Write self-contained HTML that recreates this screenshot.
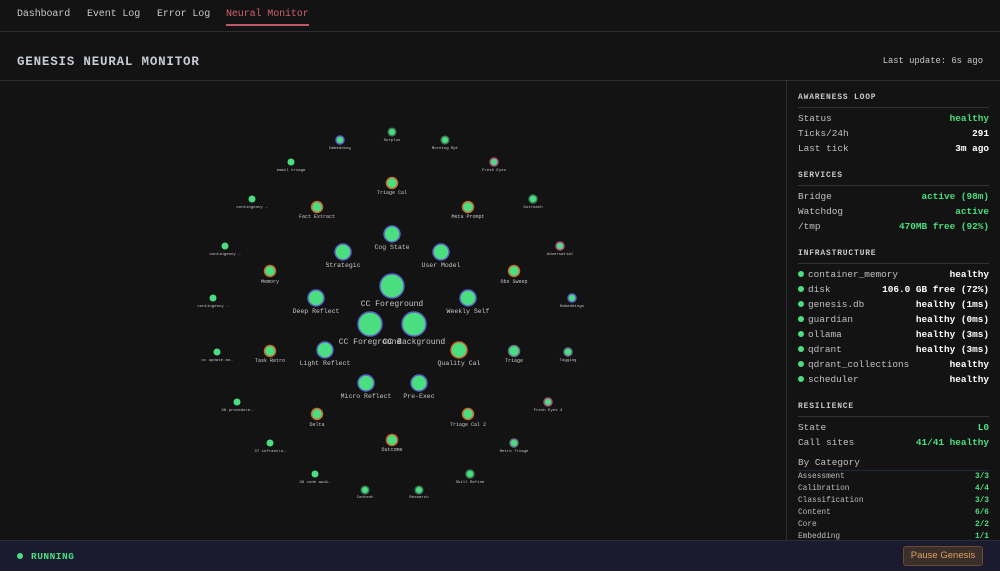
<!DOCTYPE html>
<html><head><meta charset="utf-8"><style>
*{margin:0;padding:0;box-sizing:border-box}
body{width:1000px;height:571px;background:#131313;font-family:"Liberation Mono","DejaVu Sans Mono",monospace;color:#c9c9c9;overflow:hidden;position:relative}
.nav{position:absolute;top:0;left:0;width:1000px;height:32px;border-bottom:1px solid #2e2e2e}
.nav span{position:absolute;top:9px;font-size:10px;letter-spacing:-0.1px;color:#c8c8c8}
.nav .act{color:#d0616f;border-bottom:2px solid #c0586a;padding-bottom:4px}
h1{position:absolute;left:17px;top:55px;font-size:12.5px;letter-spacing:0.8px;color:#c8ccd4;font-weight:bold}
.upd{position:absolute;right:17px;top:56px;font-size:8.8px;color:#c8c8c8}
.hline{position:absolute;left:0;top:80px;width:1000px;height:1px;background:#2e2e2e}
.vline{position:absolute;left:786px;top:80px;width:1px;height:460px;background:#2e2e2e}
.p{position:absolute;left:798px;width:191px;font-size:10px}
.sec{font-size:8px;font-weight:bold;letter-spacing:.8px;color:#c8c8c8;border-bottom:1px solid #333;padding-bottom:5px}
.r{position:absolute;left:798px;width:191px;font-size:9.4px;color:#c0c0c0;height:14px}
.r b{position:absolute;right:0;top:0;color:#fff}
.r b.g{color:#4ade80}
.r i{display:inline-block;width:6px;height:6px;border-radius:50%;background:#4ade80;margin-right:4px;vertical-align:0px}
.s{position:absolute;left:798px;width:191px;font-size:7.8px;color:#bdbdbd}
.s b{position:absolute;right:0;top:0;color:#4ade80}
.foot{position:absolute;left:0;top:540px;width:1000px;height:31px;background:#1a1b2e;border-top:1px solid #2a2b40}
.run{position:absolute;left:17px;top:10px;font-size:9.5px;font-weight:bold;color:#4ade80;letter-spacing:.5px}
.run i{display:inline-block;width:6px;height:6px;border-radius:50%;background:#4ade80;margin-right:8px}
.btn{position:absolute;left:903px;top:5px;width:80px;height:20px;border:1px solid #6b4a2c;border-radius:3px;background:#3a2f2b;color:#e0a25b;font-family:"Liberation Sans",sans-serif;font-size:9.5px;text-align:center;line-height:18px}
svg text{font-family:"Liberation Mono",monospace;fill:#c8c8c8;text-anchor:middle}
</style></head><body>
<div class="nav"><span style="left:17px">Dashboard</span><span style="left:87px">Event Log</span><span style="left:157px">Error Log</span><span class="act" style="left:226px">Neural Monitor</span></div>
<h1>GENESIS NEURAL MONITOR</h1>
<div class="upd">Last update: 6s ago</div>
<div class="hline"></div><div class="vline"></div>
<svg width="786" height="460" style="position:absolute;left:0;top:81px" viewBox="0 81 786 460">
<g fill="#4ade80" stroke-width="1.5">
<circle cx="392" cy="286" r="12" stroke="#5b5fc7"/>
<circle cx="370" cy="324" r="12" stroke="#5b5fc7"/>
<circle cx="414" cy="324" r="12" stroke="#5b5fc7"/>
<circle cx="392" cy="234" r="8" stroke="#5b5fc7"/>
<circle cx="343" cy="252" r="8" stroke="#5b5fc7"/>
<circle cx="441" cy="252" r="8" stroke="#5b5fc7"/>
<circle cx="316" cy="298" r="8" stroke="#5b5fc7"/>
<circle cx="468" cy="298" r="8" stroke="#5b5fc7"/>
<circle cx="325" cy="350" r="8" stroke="#5b5fc7"/>
<circle cx="459" cy="350" r="8" stroke="#c86a32"/>
<circle cx="366" cy="383" r="8" stroke="#5b5fc7"/>
<circle cx="419" cy="383" r="8" stroke="#5b5fc7"/>
<circle cx="392" cy="183" r="5.5" stroke="#c86a32"/>
<circle cx="317" cy="207" r="5.5" stroke="#c86a32"/>
<circle cx="468" cy="207" r="5.5" stroke="#c86a32"/>
<circle cx="270" cy="271" r="5.5" stroke="#c86a32"/>
<circle cx="514" cy="271" r="5.5" stroke="#c86a32"/>
<circle cx="270" cy="351" r="5.5" stroke="#c86a32"/>
<circle cx="317" cy="414" r="5.5" stroke="#c86a32"/>
<circle cx="468" cy="414" r="5.5" stroke="#c86a32"/>
<circle cx="392" cy="440" r="5.5" stroke="#c86a32"/>
<circle cx="514" cy="351" r="5.5" stroke="#6b6f8a"/>
<circle cx="340" cy="140" r="4" stroke="#5b5fc7"/>
<circle cx="392" cy="132" r="3.8" stroke="#3a7a55"/>
<circle cx="445" cy="140" r="3.8" stroke="#3a7a55"/>
<circle cx="291" cy="162" r="3.5" stroke="none"/>
<circle cx="494" cy="162" r="4" stroke="#b04a78"/>
<circle cx="252" cy="199" r="3.5" stroke="none"/>
<circle cx="533" cy="199" r="4" stroke="#3a7a55"/>
<circle cx="225" cy="246" r="3.5" stroke="none"/>
<circle cx="560" cy="246" r="4" stroke="#b04a78"/>
<circle cx="213" cy="298" r="3.5" stroke="none"/>
<circle cx="572" cy="298" r="4" stroke="#5b5fc7"/>
<circle cx="217" cy="352" r="3.5" stroke="none"/>
<circle cx="568" cy="352" r="4" stroke="#6b6f8a"/>
<circle cx="237" cy="402" r="3.5" stroke="none"/>
<circle cx="548" cy="402" r="4" stroke="#b04a78"/>
<circle cx="270" cy="443" r="3.5" stroke="none"/>
<circle cx="514" cy="443" r="4" stroke="#6b6f8a"/>
<circle cx="315" cy="474" r="3.5" stroke="none"/>
<circle cx="470" cy="474" r="4" stroke="#3a7a55"/>
<circle cx="365" cy="490" r="3.8" stroke="#3a7a55"/>
<circle cx="419" cy="490" r="3.8" stroke="#3a7a55"/>
</g>
<g font-size="8">
<text x="392" y="306">CC Foreground</text>
<text x="370" y="344">CC Foreground</text>
<text x="414" y="344">CC Background</text>
</g>
<g font-size="6.5">
<text x="392" y="249">Cog State</text><text x="343" y="267">Strategic</text><text x="441" y="267">User Model</text>
<text x="316" y="313">Deep Reflect</text><text x="468" y="313">Weekly Self</text>
<text x="325" y="365">Light Reflect</text><text x="459" y="365">Quality Cal</text>
<text x="366" y="398">Micro Reflect</text><text x="419" y="398">Pre-Exec</text>
</g>
<g font-size="5">
<text x="392" y="194">Triage Cal</text><text x="317" y="218">Fact Extract</text><text x="468" y="218">Meta Prompt</text>
<text x="270" y="283">Memory</text><text x="514" y="283">Obs Sweep</text><text x="270" y="362">Task Retro</text>
<text x="514" y="362">Triage</text><text x="317" y="426">Delta</text><text x="468" y="426">Triage Cal 2</text>
<text x="392" y="451">Outcome</text>
</g>
<g font-size="4">
<text x="340" y="149">Embedding</text><text x="392" y="141">Surplus</text><text x="445" y="149">Morning Rpt</text>
<text x="291" y="171">email triage</text><text x="494" y="171">Fresh Eyes</text>
<text x="252" y="208">contingency …</text><text x="533" y="208">Outreach</text>
<text x="225" y="255">contingency …</text><text x="560" y="255">Adversarial</text>
<text x="213" y="307">contingency …</text><text x="572" y="307">Embeddings</text>
<text x="217" y="361">cc update an…</text><text x="568" y="361">Tagging</text>
<text x="237" y="411">38 procedure…</text><text x="548" y="411">Fresh Eyes 2</text>
<text x="270" y="452">37 infrastru…</text><text x="514" y="452">Retro Triage</text>
<text x="315" y="483">36 code audi…</text><text x="470" y="483">Skill Refine</text>
<text x="365" y="498">Content</text><text x="419" y="498">Research</text>
</g>
</svg>

<div class="p sec" style="top:93px">AWARENESS LOOP</div>
<div class="r" style="top:113px">Status<b class="g">healthy</b></div>
<div class="r" style="top:128px">Ticks/24h<b>291</b></div>
<div class="r" style="top:143px">Last tick<b>3m ago</b></div>
<div class="p sec" style="top:171px">SERVICES</div>
<div class="r" style="top:191px">Bridge<b class="g">active (98m)</b></div>
<div class="r" style="top:206px">Watchdog<b class="g">active</b></div>
<div class="r" style="top:221px">/tmp<b class="g">470MB free (92%)</b></div>
<div class="p sec" style="top:249px">INFRASTRUCTURE</div>
<div class="r" style="top:269px"><i></i>container_memory<b>healthy</b></div>
<div class="r" style="top:284px"><i></i>disk<b>106.0 GB free (72%)</b></div>
<div class="r" style="top:299px"><i></i>genesis.db<b>healthy (1ms)</b></div>
<div class="r" style="top:314px"><i></i>guardian<b>healthy (0ms)</b></div>
<div class="r" style="top:329px"><i></i>ollama<b>healthy (3ms)</b></div>
<div class="r" style="top:344px"><i></i>qdrant<b>healthy (3ms)</b></div>
<div class="r" style="top:359px"><i></i>qdrant_collections<b>healthy</b></div>
<div class="r" style="top:374px"><i></i>scheduler<b>healthy</b></div>
<div class="p sec" style="top:402px">RESILIENCE</div>
<div class="r" style="top:422px">State<b class="g">L0</b></div>
<div class="r" style="top:437px">Call sites<b class="g">41/41 healthy</b></div>
<div class="r" style="top:457px;border-bottom:1px solid #1f2838;height:14px">By Category</div>
<div class="s" style="top:473px">Assessment<b>3/3</b></div>
<div class="s" style="top:485px">Calibration<b>4/4</b></div>
<div class="s" style="top:497px">Classification<b>3/3</b></div>
<div class="s" style="top:509px">Content<b>6/6</b></div>
<div class="s" style="top:521px">Core<b>2/2</b></div>
<div class="s" style="top:533px">Embedding<b>1/1</b></div>

<div class="foot"><div class="run"><i></i>RUNNING</div><div class="btn">Pause Genesis</div></div>
</body></html>
